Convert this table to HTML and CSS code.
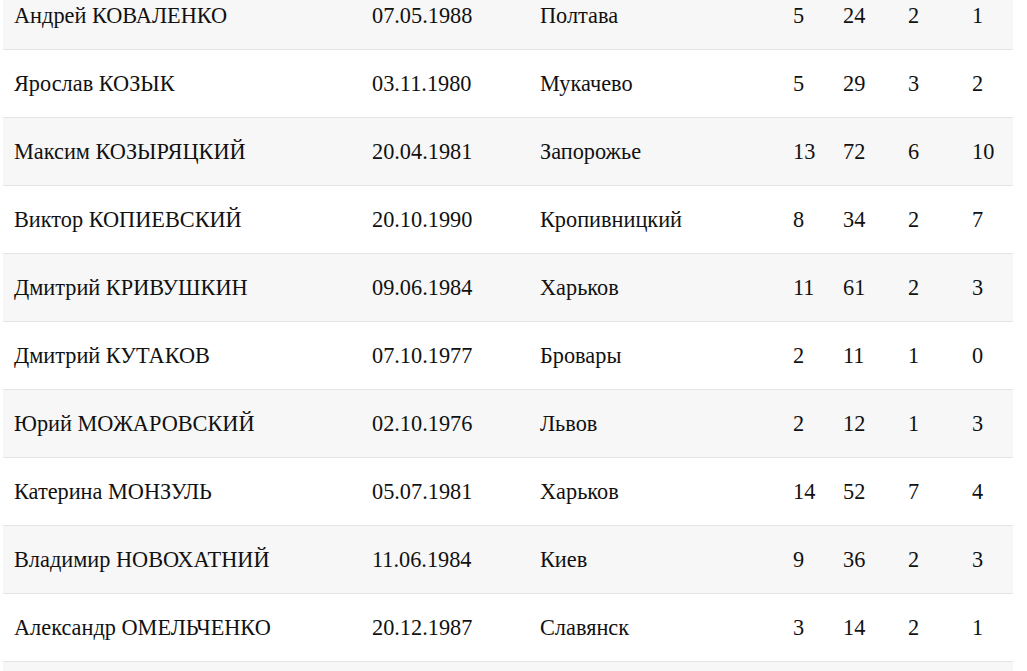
FILE: index.html
```html
<!DOCTYPE html>
<html lang="ru">
<head>
<meta charset="utf-8">
<title>Игроки</title>
<link rel="stylesheet" href="styles.css">
</head>
<body>
<div class="page">
<table class="players">
<colgroup>
<col class="c-name"><col class="c-date"><col class="c-city"><col class="c-n1"><col class="c-n2"><col class="c-n3"><col class="c-n4">
</colgroup>
<tbody>
<tr><td>Андрей КОВАЛЕНКО</td><td>07.05.1988</td><td>Полтава</td><td>5</td><td>24</td><td>2</td><td>1</td></tr>
<tr><td>Ярослав КОЗЫК</td><td>03.11.1980</td><td>Мукачево</td><td>5</td><td>29</td><td>3</td><td>2</td></tr>
<tr><td>Максим КОЗЫРЯЦКИЙ</td><td>20.04.1981</td><td>Запорожье</td><td>13</td><td>72</td><td>6</td><td>10</td></tr>
<tr><td>Виктор КОПИЕВСКИЙ</td><td>20.10.1990</td><td>Кропивницкий</td><td>8</td><td>34</td><td>2</td><td>7</td></tr>
<tr><td>Дмитрий КРИВУШКИН</td><td>09.06.1984</td><td>Харьков</td><td>11</td><td>61</td><td>2</td><td>3</td></tr>
<tr><td>Дмитрий КУТАКОВ</td><td>07.10.1977</td><td>Бровары</td><td>2</td><td>11</td><td>1</td><td>0</td></tr>
<tr><td>Юрий МОЖАРОВСКИЙ</td><td>02.10.1976</td><td>Львов</td><td>2</td><td>12</td><td>1</td><td>3</td></tr>
<tr><td>Катерина МОНЗУЛЬ</td><td>05.07.1981</td><td>Харьков</td><td>14</td><td>52</td><td>7</td><td>4</td></tr>
<tr><td>Владимир НОВОХАТНИЙ</td><td>11.06.1984</td><td>Киев</td><td>9</td><td>36</td><td>2</td><td>3</td></tr>
<tr><td>Александр ОМЕЛЬЧЕНКО</td><td>20.12.1987</td><td>Славянск</td><td>3</td><td>14</td><td>2</td><td>1</td></tr>
<tr><td></td><td></td><td></td><td></td><td></td><td></td><td></td></tr>
</tbody>
</table>
</div>
</body>
</html>
```

FILE: styles.css
```css
html, body {
  margin: 0;
  padding: 0;
  background: #ffffff;
}
.page {
  padding: 0 14px 0 3px;
  overflow: hidden;
  height: 671px;
}
.players {
  width: 1010px;
  margin-top: -19px;
  border-collapse: collapse;
  table-layout: fixed;
  font-family: "Liberation Serif", "Times New Roman", serif;
  font-size: 22.3px;
  color: #111111;
}
.c-name { width: 358px; }
.c-date { width: 168px; }
.c-city { width: 253px; }
.c-n1 { width: 50px; }
.c-n2 { width: 65px; }
.c-n3 { width: 64px; }
.c-n4 { width: 52px; }
.players td {
  height: 68px;
  padding: 2px 0 0 11px;
  vertical-align: middle;
  border-top: 1px solid #e4e4e4;
  text-align: left;
  white-space: nowrap;
  box-sizing: border-box;
}
.players tr:first-child td {
  border-top: none;
}
.players tr:nth-child(odd) td {
  background: #f7f7f7;
}
```
